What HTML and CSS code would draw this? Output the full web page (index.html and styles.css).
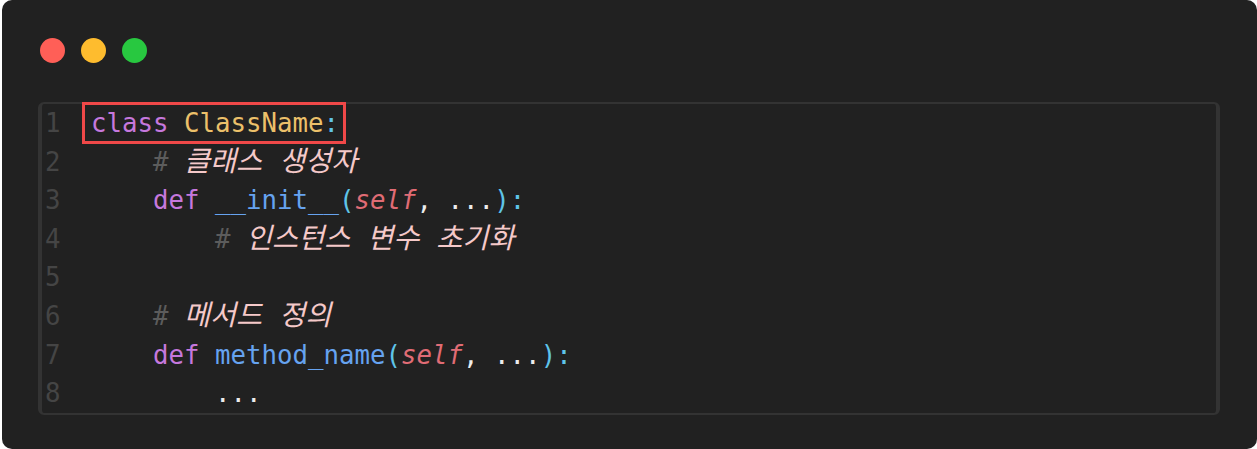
FILE: index.html
```html
<!DOCTYPE html>
<html lang="ko">
<head>
<meta charset="utf-8">
<title>Python class</title>
<link rel="stylesheet" href="styles.css">
</head>
<body>
<div class="card">
  <div class="dots">
    <span class="dot red"></span>
    <span class="dot yellow"></span>
    <span class="dot green"></span>
  </div>
  <div class="code">
    <div class="line"><span class="ln">1</span><span class="src"><span class="hl"><span class="kw">class</span> <span class="cls">ClassName</span><span class="pn">:</span></span></span></div>
    <div class="line"><span class="ln">2</span><span class="src">    <span class="hash">#</span> <span class="cm">클래스 생성자</span></span></div>
    <div class="line"><span class="ln">3</span><span class="src">    <span class="kw">def</span> <span class="fn">__init__</span><span class="pn">(</span><span class="self">self</span><span class="tx">, ...</span><span class="pn">):</span></span></div>
    <div class="line"><span class="ln">4</span><span class="src">        <span class="hash">#</span> <span class="cm">인스턴스 변수 초기화</span></span></div>
    <div class="line"><span class="ln">5</span><span class="src"></span></div>
    <div class="line"><span class="ln">6</span><span class="src">    <span class="hash">#</span> <span class="cm">메서드 정의</span></span></div>
    <div class="line"><span class="ln">7</span><span class="src">    <span class="kw">def</span> <span class="fn">method_name</span><span class="pn">(</span><span class="self">self</span><span class="tx">, ...</span><span class="pn">):</span></span></div>
    <div class="line"><span class="ln">8</span><span class="src">        <span class="tx">...</span></span></div>
  </div>
</div>
</body>
</html>
```
FILE: styles.css
```css
html, body {
  margin: 0;
  padding: 0;
  background: #ffffff;
}

.card {
  margin-left: 2px;
  width: 1255px;
  height: 449px;
  box-sizing: border-box;
  background: #212121;
  border-radius: 10px;
  padding: 38px 37px 0 36px;
}

.dots {
  display: flex;
  gap: 16px;
  padding-left: 2px;
  height: 26px;
}

.dot {
  width: 25px;
  height: 25px;
  border-radius: 50%;
  display: block;
}
.dot.red { background: #ff5f57; }
.dot.yellow { background: #febc2e; }
.dot.green { background: #28c840; }

.code {
  margin-top: 38px;
  border-style: solid;
  border-color: #333333;
  border-width: 2px 4px 2px 4px;
  border-radius: 6px;
  background: #212121;
  font-family: "DejaVu Sans Mono", "Noto Sans CJK KR", monospace;
  font-size: 25.75px;
  line-height: 38.6px;
  color: #dcdfe4;
}

.line {
  display: flex;
  white-space: pre;
  height: 38.6px;
}

.ln {
  width: 49px;
  padding-left: 3px;
  box-sizing: border-box;
  color: #454545;
  flex: none;
}

.src { flex: 1; }

.hl {
  padding: 3px 4px 3px 6px;
  margin-left: -6px;
  margin-right: -4px;
  outline: 3px solid #f04848;
}

.kw { color: #c678dd; }
.cls { color: #ecc06a; }
.fn { color: #66a3f0; }
.pn { color: #5fc4e8; }
.self { color: #e06c75; font-style: italic; }
.tx { color: #ececec; }
.hash { color: #5c5c5c; }
.cm {
  color: #f5c9c9;
  font-style: italic;
  font-family: "DejaVu Sans Mono", "Noto Sans CJK KR", sans-serif;
  font-size: 28.3px;
  line-height: 38.6px;
}
```
